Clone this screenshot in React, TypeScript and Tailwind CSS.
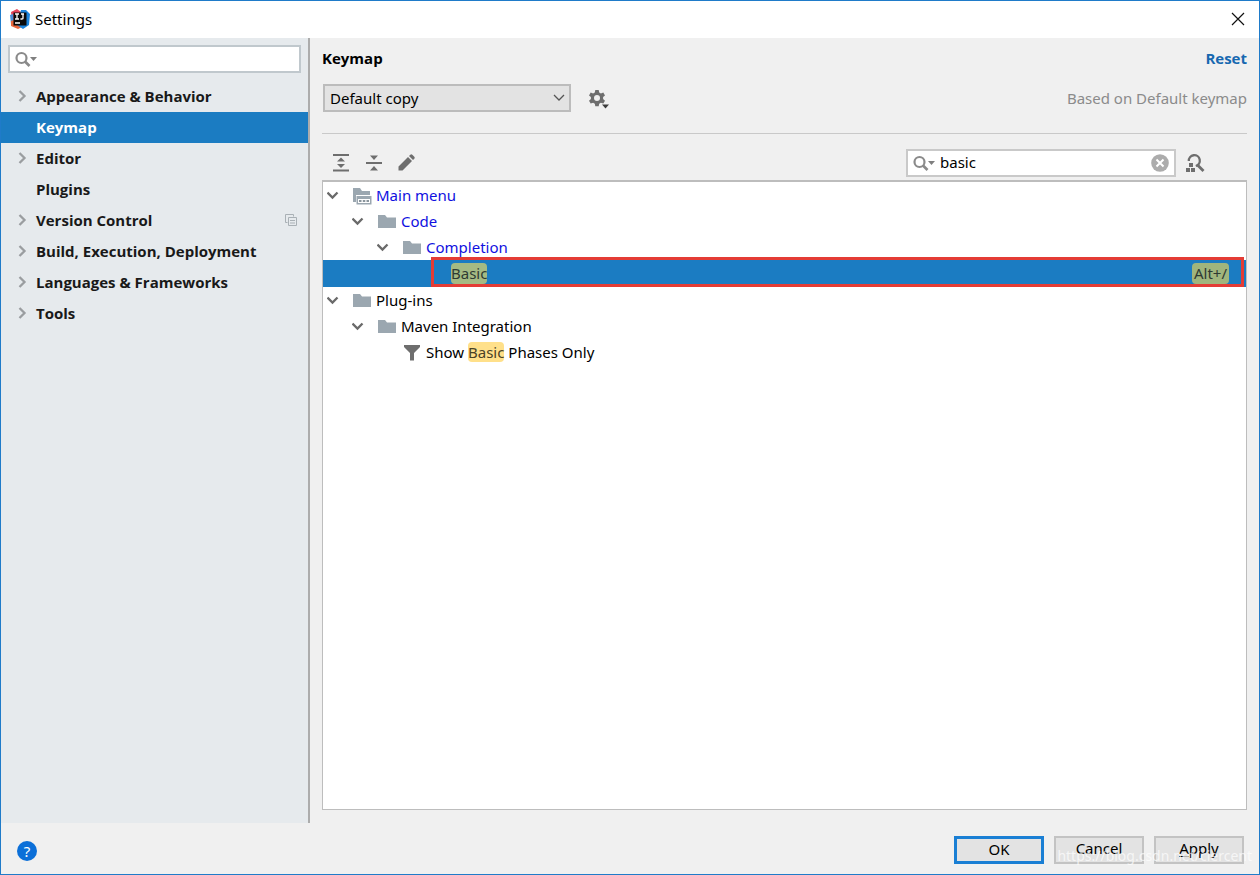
import type { ReactNode } from "react";

function SearchGlyph() {
  return (
    <svg width="24" height="18" viewBox="0 0 24 18" className="shrink-0" aria-hidden="true">
      <circle cx="7.5" cy="8" r="5" fill="none" stroke="#8a8a8a" strokeWidth="2.2" />
      <path d="M11 11.500l4.500 4.500" stroke="#8a8a8a" strokeWidth="2.6" />
      <path d="M16 7h7l-3.500 4z" fill="#7f7f7f" />
    </svg>
  );
}

function Chevron({ open }: { open?: boolean }) {
  return open ? (
    <svg width="12" height="12" viewBox="0 0 12 12" fill="none" stroke="#6a6a6a" strokeWidth="2.3" aria-hidden="true">
      <path d="M0.500 3.500l5 5 5-5" />
    </svg>
  ) : (
    <svg width="12" height="12" viewBox="0 0 12 12" fill="none" stroke="#9a9da0" strokeWidth="2.3" aria-hidden="true">
      <path d="M3.500 1l5 5-5 5" />
    </svg>
  );
}

function Folder({ menu }: { menu?: boolean }) {
  return (
    <svg width="20" height="20" viewBox="0 0 20 20" fill="#9ba7b0" aria-hidden="true">
      {menu ? (
        <>
          <path d="M1 3h7l2 3h8v4H4v7H1z" />
          <path d="M4.500 11h15v8.500h-15z" />
          <path d="M6 14h12v4H6z" fill="#fff" />
          <path d="M7 15h2.500v2H7zM10.800 15h2.500v2h-2.500zM14.500 15H17v2h-2.500z" fill="#8a959d" />
        </>
      ) : (
        <path d="M1 4h7l2 2.500h9V17H1z" />
      )}
    </svg>
  );
}

function Funnel() {
  return (
    <svg width="18" height="20" viewBox="0 0 18 20" fill="#6e6e6e" aria-hidden="true">
      <path d="M1 3h16v2l-6 6v7.500H7V11L1 5z" />
    </svg>
  );
}

const sections = [
  { name: "Appearance & Behavior", expandable: true },
  { name: "Keymap", selected: true },
  { name: "Editor", expandable: true },
  { name: "Plugins" },
  { name: "Version Control", expandable: true, perProject: true },
  { name: "Build, Execution, Deployment", expandable: true },
  { name: "Languages & Frameworks", expandable: true },
  { name: "Tools", expandable: true },
];

function Sidebar() {
  return (
    <aside className="flex w-[309px] shrink-0 flex-col border-r-2 border-[#acacac] bg-[#e6eaed] pt-[7px]">
      <label className="mx-[7px] flex h-7 items-center border-2 border-[#c0c8cd] bg-white pl-1">
        <SearchGlyph />
        <input aria-label="Search settings" className="min-w-0 flex-1 bg-transparent outline-none" />
      </label>
      <nav className="mt-2 flex flex-col font-['Open_Sans','Noto_Sans',sans-serif]">
        {sections.map((s) => (
          <button
            key={s.name}
            className={
              s.selected
                ? "flex h-[31px] items-center bg-[#1b7cc2] pb-0.5 pl-[15px] text-left font-bold text-white"
                : "flex h-[31px] items-center pb-0.5 pl-[15px] text-left font-bold text-[#191919]"
            }
          >
            <span className="flex w-5 shrink-0">{s.expandable && <Chevron />}</span>
            <span className="flex-1">{s.name}</span>
            {s.perProject && (
              <svg width="12" height="12" viewBox="0 0 12 12" fill="none" stroke="#a9b0b5" className="mr-[11px]" aria-hidden="true">
                <path d="M2.500 8.500h-2v-8h8v2" />
                <path d="M3.500 3.500h8v8h-8zM5 6.500h5M5 9h5" />
              </svg>
            )}
          </button>
        ))}
      </nav>
    </aside>
  );
}

function ToolButton({ label, children }: { label: string; children: ReactNode }) {
  return (
    <button aria-label={label} className="flex size-[22px] items-center justify-center">
      {children}
    </button>
  );
}

function Toolbar() {
  return (
    <div className="flex h-7 items-center gap-[11px] pl-2">
      <ToolButton label="Expand all">
        <svg width="18" height="20" viewBox="0 0 18 20" fill="#6e6e6e" aria-hidden="true">
          <path d="M1 1h16v2H1zM1 16.500h16v2H1zM9 4.500l4 4H5zM9 15l4-4H5z" />
        </svg>
      </ToolButton>
      <ToolButton label="Collapse all">
        <svg width="18" height="18" viewBox="0 0 18 18" fill="#6e6e6e" aria-hidden="true">
          <path d="M1 8h16v2H1zM9 6l4-4.500H5zM9 12l4 4.500H5z" />
        </svg>
      </ToolButton>
      <ToolButton label="Edit shortcut">
        <svg width="18" height="18" viewBox="0 0 18 18" fill="#6e6e6e" aria-hidden="true">
          <path d="M.500 16.500v-4l9.500-9.500 4 4-9.500 9.500zM11 2l1.300-1.300q1-.8 2 0l2 2q.8 1 0 2L15 6z" />
        </svg>
      </ToolButton>
      <div className="ml-auto mr-[42px] flex items-center gap-[9px]">
        <label className="flex h-7 w-[270px] items-center border-2 border-[#c9c9c9] bg-white pl-1">
          <SearchGlyph />
          <input
            aria-label="Search actions"
            defaultValue="basic"
            className="min-w-0 flex-1 bg-transparent pb-0.5 pl-1 text-black outline-none"
          />
          <button aria-label="Clear search" className="mr-[5px]">
            <svg width="18" height="18" viewBox="0 0 18 18" aria-hidden="true">
              <circle cx="9" cy="9" r="8.800" fill="#acacac" />
              <path d="M5.500 5.500l7 7M12.500 5.500l-7 7" stroke="#fff" strokeWidth="2" />
            </svg>
          </button>
        </label>
        <button aria-label="Find actions by shortcut" className="flex">
          <svg width="20" height="20" viewBox="0 0 20 20" aria-hidden="true">
            <path d="M3.800 8a5.500 5.500 0 1 1 7 5" fill="none" stroke="#6e6e6e" strokeWidth="2.300" />
            <path d="M12.500 12l6 6" stroke="#6e6e6e" strokeWidth="2.800" />
            <path d="M4 10h4v4H4zM1 15h4v4H1zM6 15h4v4H6z" fill="#6e6e6e" />
          </svg>
        </button>
      </div>
    </div>
  );
}

function TreeRow({ indent, icon, children }: { indent: string; icon: ReactNode; children: ReactNode }) {
  return (
    <li className={"flex h-[26px] items-center " + indent}>
      {icon}
      {children}
    </li>
  );
}

function Branch({ menu }: { menu?: boolean }) {
  return (
    <span className="mr-1 flex items-center gap-[13px]">
      <Chevron open />
      <Folder menu={menu} />
    </span>
  );
}

function KeymapTree() {
  return (
    <ul className="flex-1 border border-t-2 border-[#bdbdbd] bg-white text-black">
      <TreeRow indent="pl-1" icon={<Branch menu />}>
        <span className="text-[#1010e0]">Main menu</span>
      </TreeRow>
      <TreeRow indent="pl-[29px]" icon={<Branch />}>
        <span className="text-[#1010e0]">Code</span>
      </TreeRow>
      <TreeRow indent="pl-[54px]" icon={<Branch />}>
        <span className="text-[#1010e0]">Completion</span>
      </TreeRow>
      <li className="relative flex h-[27px] items-center justify-between bg-[#1b7cc2] pl-32 pr-[17px] text-[#2f3a33]">
        <mark className="rounded-sm bg-[#a5ba83] leading-[21px] text-inherit">Basic</mark>
        <kbd className="rounded-sm bg-[#a0b57d] px-0.5 font-[inherit] leading-[21px]">Alt+/</kbd>
        <span className="absolute -top-[3px] bottom-0 left-[108px] right-0.5 border-[3px] border-[#e43c35]" />
      </li>
      <TreeRow indent="pl-1" icon={<Branch />}>Plug-ins</TreeRow>
      <TreeRow indent="pl-[29px]" icon={<Branch />}>Maven Integration</TreeRow>
      <TreeRow indent="pl-[80px]" icon={<span className="mr-[5px]"><Funnel /></span>}>
        <span className="whitespace-pre">
          Show <mark className="rounded-sm bg-[#ffe08a] text-[#4a4226]">Basic</mark> Phases Only
        </span>
      </TreeRow>
    </ul>
  );
}

function Gear() {
  return (
    <svg width="22" height="20" viewBox="0 0 22 20" aria-hidden="true">
      <g fill="#6e6e6e">
        <path
          fillRule="evenodd"
          d="M7.300 0h3.400l.5 2.400 1.700 1 2.400-.8 1.700 2.900-1.900 1.600v2l1.900 1.600-1.700 2.900-2.400-.8-1.700 1-.5 2.400H7.300l-.5-2.400-1.700-1-2.400.8L1 10.700l1.900-1.600v-2L1 5.500l1.700-2.900 2.400.8 1.700-1zM9 5.100a3 3 0 1 0 0 6a3 3 0 1 0 0-6z"
        />
      </g>
      <path d="M14 14.500h7l-3.500 4z" fill="#3c3c3c" />
    </svg>
  );
}

function KeymapPanel() {
  return (
    <main className="flex min-w-0 flex-1 flex-col px-3 pb-[13px]">
      <div className="flex h-10 items-center justify-between font-['Open_Sans','Noto_Sans',sans-serif]">
        <h1 className="font-bold text-black">Keymap</h1>
        <a href="#reset" className="font-bold text-[#1768b0]">Reset</a>
      </div>
      <div className="mt-[6px] flex h-7 items-center">
        <div className="relative ml-px">
          <select
            aria-label="Keymap"
            className="h-7 w-[248px] appearance-none border-2 border-[#bcbcbc] bg-[#e3e3e3] pl-[5px] text-black"
          >
            <option>Default copy</option>
          </select>
          <svg
            width="12"
            height="8"
            viewBox="0 0 12 8"
            fill="none"
            stroke="#555"
            strokeWidth="1.300"
            className="pointer-events-none absolute right-[6px] top-[10px]"
            aria-hidden="true"
          >
            <path d="M1 1l5 5 5-5" />
          </svg>
        </div>
        <button aria-label="Keymap actions" className="ml-[17px] mt-1">
          <Gear />
        </button>
        <span className="ml-auto text-[#8b8b8b]">Based on Default keymap</span>
      </div>
      <hr className="mb-[15px] mt-[21px] border-[#c9c9c9]" />
      <Toolbar />
      <div className="mt-[3px] flex flex-1 flex-col">
        <KeymapTree />
      </div>
    </main>
  );
}

export default function App() {
  return (
    <div className="flex min-h-screen flex-col border border-[#1f7bc9] bg-[#f0f0f0] font-['Noto_Sans','Open_Sans',sans-serif] text-[15px] leading-5">
      <header className="flex h-[37px] items-center bg-white pb-px pl-[9px] pr-[14px] text-black">
        <svg width="20" height="20" viewBox="0 0 20 20" aria-hidden="true">
          <path d="M1 3l6-3 4 3-3 9-6 1z" fill="#e5455b" />
          <path d="M0 6l3-1 1 8-3 2z" fill="#4b8fd8" />
          <path d="M1 12l6-2 5 8-4 2-7-3z" fill="#e8663c" />
          <path d="M11 1l5 0 4 4-1 11-6 4-6-4z" fill="#1b84dd" />
          <path d="M3.500 3.500h13v13h-13z" fill="#0a0a0a" />
          <path d="M5 5h4M7 5v5M5 10h4M11 5h3M13 5v4.200q0 1.200-2.600.6M5 14h5" stroke="#fff" strokeWidth="1.300" fill="none" />
        </svg>
        <span className="ml-[5px] flex-1">Settings</span>
        <button aria-label="Close">
          <svg width="14" height="14" viewBox="0 0 14 14" stroke="#111" strokeWidth="1.200" aria-hidden="true">
            <path d="M1 1l12 12M13 1L1 13" />
          </svg>
        </button>
      </header>
      <div className="flex flex-1">
        <Sidebar />
        <KeymapPanel />
      </div>
      <footer className="relative flex h-[51px] items-center pl-4 pr-[15px] pt-0.5 text-black">
        <button aria-label="Help" className="mt-0.5 flex size-5 items-center justify-center rounded-full bg-[#0b6fd8] text-white">
          ?
        </button>
        <div className="ml-auto flex gap-[10px]">
          <button className="h-7 w-[90px] border-[3px] border-[#1a7fd4] bg-[#e3e3e3] pb-[3px]">OK</button>
          <button className="h-7 w-[90px] border-2 border-[#c3c3c3] bg-[#e3e3e3] pb-[3px]">Cancel</button>
          <button className="h-7 w-[90px] border-2 border-[#c3c3c3] bg-[#e3e3e3] pb-[3px]">
            <span className="underline underline-offset-2">A</span>pply
          </button>
        </div>
        <span className="pointer-events-none absolute bottom-2 right-[7px] text-sm text-white/70">
          https://blog.csdn.net/ciercent
        </span>
      </footer>
    </div>
  );
}
